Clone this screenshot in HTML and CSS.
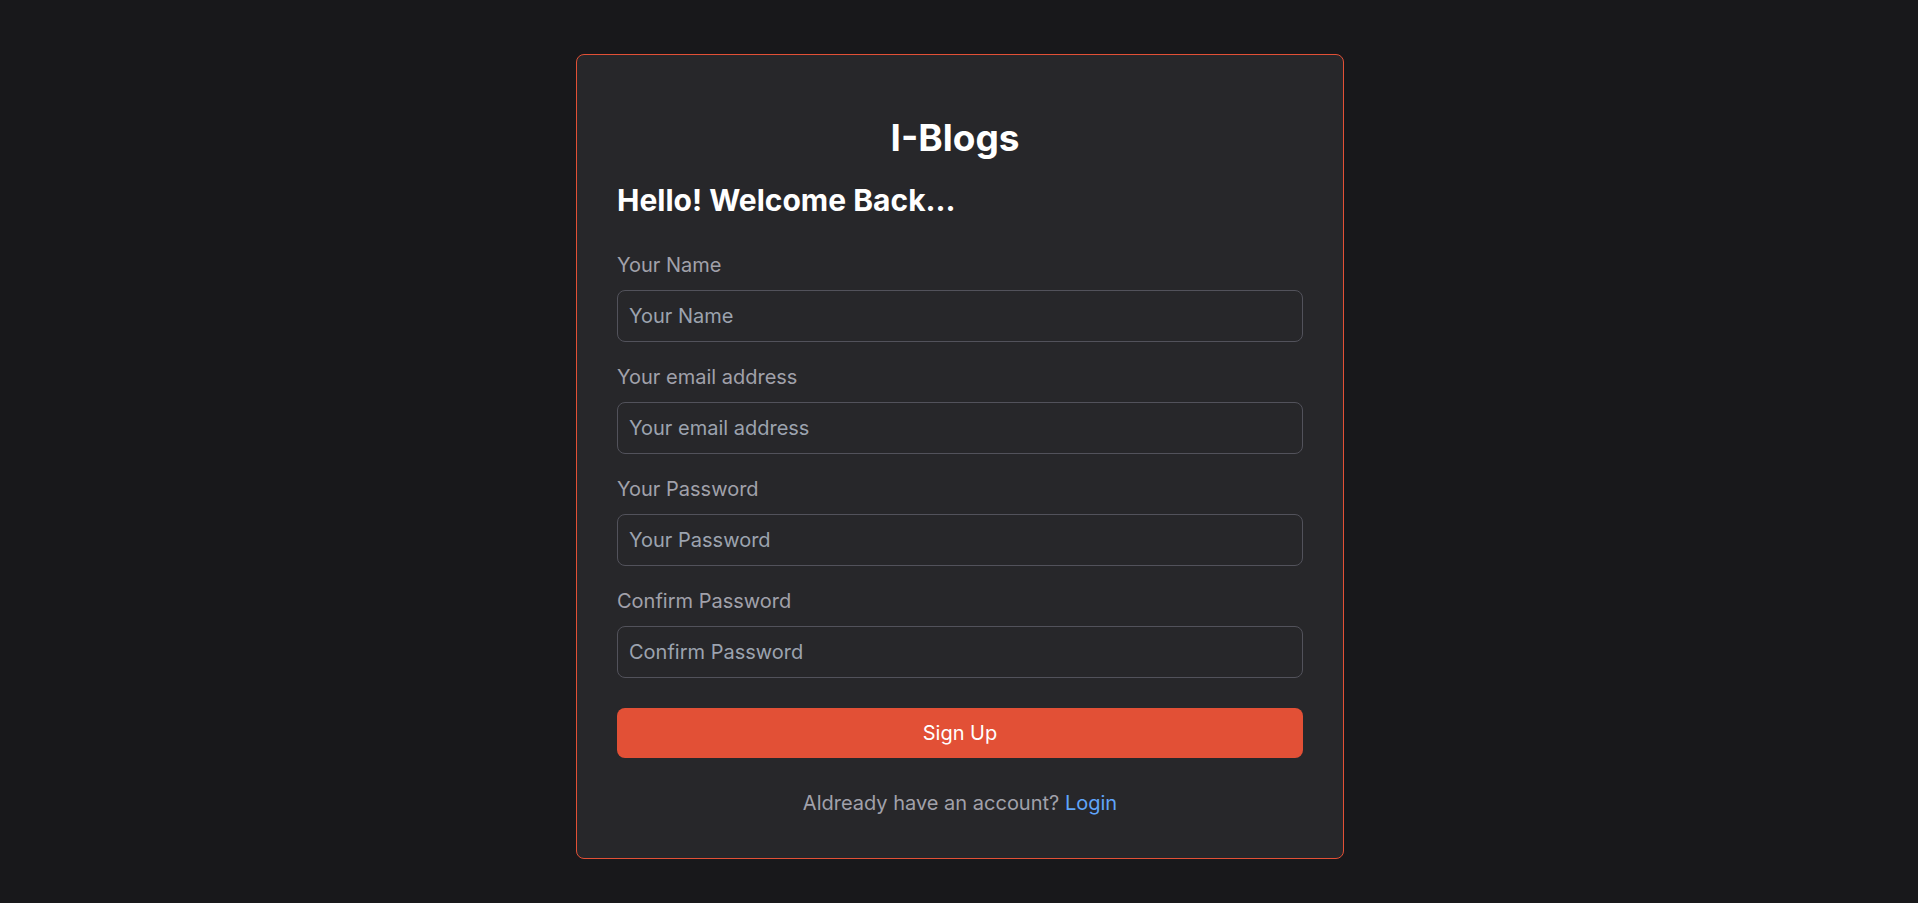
FILE: index.html
```html
<!DOCTYPE html>
<html lang="en">
<head>
<meta charset="utf-8">
<title>I-Blogs - Sign Up</title>
<link rel="stylesheet" href="styles.css">
</head>
<body>
<main class="page">
  <form class="card">
    <h1 class="brand">I-Blogs</h1>
    <h2 class="greeting">Hello! Welcome Back...</h2>
    <div class="field">
      <label class="label" for="name">Your Name</label>
      <input class="input" id="name" type="text" placeholder="Your Name">
    </div>
    <div class="field">
      <label class="label" for="email">Your email address</label>
      <input class="input" id="email" type="email" placeholder="Your email address">
    </div>
    <div class="field">
      <label class="label" for="password">Your Password</label>
      <input class="input" id="password" type="password" placeholder="Your Password">
    </div>
    <div class="field">
      <label class="label" for="confirm">Confirm Password</label>
      <input class="input" id="confirm" type="password" placeholder="Confirm Password">
    </div>
    <button class="submit" type="button">Sign Up</button>
    <p class="footer">Aldready have an account? <a class="link" href="#">Login</a></p>
  </form>
</main>
</body>
</html>
```

FILE: styles.css
```css
* { box-sizing: border-box; }
html, body {
  margin: 0;
  padding: 0;
  background: #18181b;
  font-family: Inter, "Liberation Sans", sans-serif;
}
.page {
  display: flex;
  justify-content: center;
  padding-top: 54px;
  padding-left: 2px;
  min-height: 903px;
}
.card {
  width: 768px;
  height: 805px;
  background: #27272a;
  border: 1px solid #e25036;
  border-radius: 8px;
  padding: 40px;
  display: flex;
  flex-direction: column;
}
.brand {
  margin: 23px 0 0;
  padding-right: 10px;
  font-size: 37px;
  line-height: 40px;
  font-weight: 700;
  color: #ffffff;
  text-align: center;
}
.greeting {
  margin: 24px 0 0;
  font-size: 30px;
  line-height: 36px;
  font-weight: 700;
  color: #ffffff;
}
.field {
  display: flex;
  flex-direction: column;
}
.field:first-of-type { margin-top: 33px; }
.field + .field { margin-top: 21px; }
.label {
  font-size: 20px;
  line-height: 28px;
  color: #a1a1aa;
  margin-bottom: 11px;
}
.input {
  height: 52px;
  width: 100%;
  padding: 0 11px;
  background: #27272a;
  border: 1px solid #52525b;
  border-radius: 8px;
  font-family: inherit;
  font-size: 20px;
  color: #e4e4e7;
  outline: none;
}
.input::placeholder { color: #9ca3af; }
.submit {
  margin-top: 30px;
  height: 50px;
  width: 100%;
  border: none;
  border-radius: 8px;
  background: #e25036;
  color: #ffffff;
  font-family: inherit;
  font-size: 20px;
  cursor: pointer;
}
.footer {
  margin: 31px 0 0;
  font-size: 20px;
  line-height: 28px;
  color: #a1a1aa;
  text-align: center;
}
.link {
  color: #60a5fa;
  text-decoration: none;
}
```
